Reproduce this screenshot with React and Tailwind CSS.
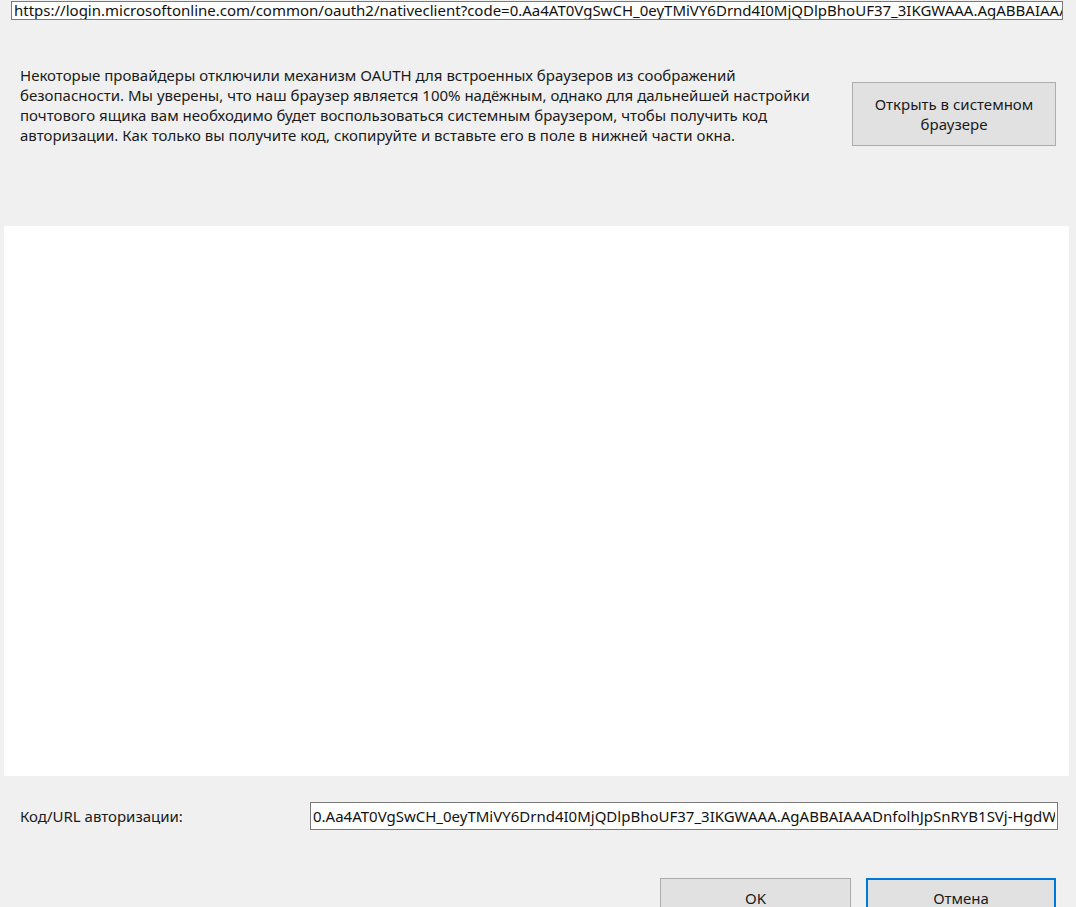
import { useState } from "react";

const FONT = { fontFamily: '"Noto Sans", "Open Sans", sans-serif' };

const AUTH_URL =
  "https://login.microsoftonline.com/common/oauth2/nativeclient?code=0.Aa4AT0VgSwCH_0eyTMiVY6Drnd4I0MjQDlpBhoUF37_3IKGWAAA.AgABBAIAAADnfolhJpSnRYB1SVj-HgdWn5sQ2xYk&session_state=6d3f1a2c";
const AUTH_CODE =
  "0.Aa4AT0VgSwCH_0eyTMiVY6Drnd4I0MjQDlpBhoUF37_3IKGWAAA.AgABBAIAAADnfolhJpSnRYB1SVj-HgdWn5sQ2xYk";

function WinButton({ children, primary, className = "" }) {
  return (
    <button
      className={
        "shrink-0 bg-[#e1e1e1] text-[#1a1a1a] text-[15px] leading-[20px] " +
        (primary ? "border-2 border-[#0078d7] " : "border border-[#adadad] ") +
        className
      }
    >
      {children}
    </button>
  );
}

export default function App() {
  const [code, setCode] = useState(AUTH_CODE);

  // окно выше видимой области: нижние кнопки обрезаются краем
  return (
    <div className="w-full h-[907px] bg-[#f0f0f0] flex flex-col overflow-hidden" style={FONT}>
      {/* адресная строка */}
      <div className="shrink-0 mt-[1px] ml-[11px] mr-[13px] h-[19px] border border-[#7a7a7a] bg-white overflow-hidden whitespace-nowrap">
        <div className="pl-[2px] text-[15px] leading-[17px] text-[#111]">{AUTH_URL}</div>
      </div>

      {/* пояснение + кнопка системного браузера */}
      <div className="shrink-0 flex items-start mt-[45px] pl-[20px] pr-[20px]">
        <p className="w-[800px] text-[15px] leading-[20px] text-[#1a1a1a]">
          Некоторые провайдеры отключили механизм OAUTH для встроенных браузеров из соображений
          безопасности. Мы уверены, что наш браузер является 100% надёжным, однако для дальнейшей настройки
          почтового ящика вам необходимо будет воспользоваться системным браузером, чтобы получить код
          авторизации. Как только вы получите код, скопируйте и вставьте его в поле в нижней части окна.
        </p>
        <div className="flex-1" />
        <WinButton className="w-[204px] h-[64px] mt-[17px] px-4">
          Открыть в системном браузере
        </WinButton>
      </div>

      {/* область встроенного браузера */}
      <div className="shrink-0 mt-[80px] ml-[4px] mr-[7px] h-[550px] bg-white" />

      {/* поле для кода */}
      <div className="shrink-0 flex items-center mt-[26px] pl-[20px]">
        <span className="w-[290px] text-[15px] text-[#1a1a1a]">Код/URL авторизации:</span>
        <input
          value={code}
          onChange={(e) => setCode(e.target.value)}
          className="w-[748px] h-[28px] px-[2px] border border-[#7a7a7a] bg-white text-[15px] text-[#111] outline-none"
        />
      </div>

      <div className="shrink-0 flex justify-end gap-[15px] mt-[48px] pr-[20px]">
        <WinButton className="w-[191px] h-[40px]">OK</WinButton>
        <WinButton primary className="w-[190px] h-[40px]">
          Отмена
        </WinButton>
      </div>
    </div>
  );
}
